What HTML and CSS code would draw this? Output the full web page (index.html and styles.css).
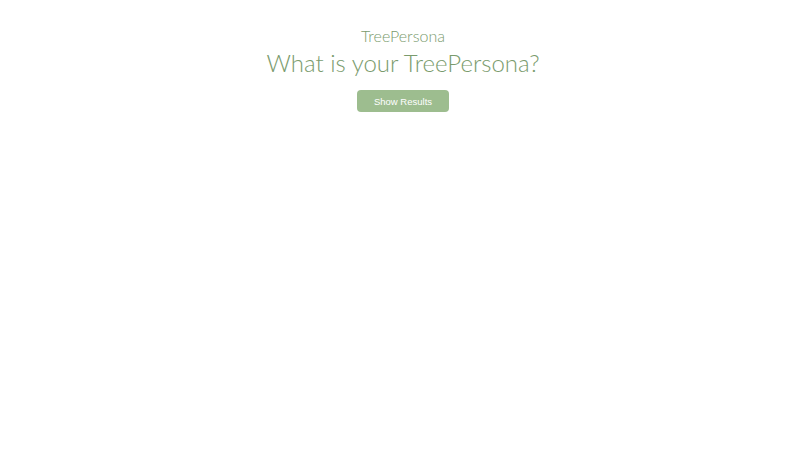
FILE: index.html
```html
<!DOCTYPE html>
<html>
<head>
<meta charset="utf-8">
<link rel="stylesheet" href="styles.css">
</head>
<body>
<main class="page">
  <p class="brand">TreePersona</p>
  <h1 class="title">What is your TreePersona?</h1>
  <button class="btn">Show Results</button>
</main>
</body>
</html>
```
FILE: styles.css
```css
html, body { margin: 0; padding: 0; background: #fff; }
.page {
  display: flex;
  flex-direction: column;
  align-items: center;
  padding-top: 26px;
  font-family: "Lato", "Liberation Sans", sans-serif;
  color: #7a9b6d;
}
.brand {
  margin: 0;
  font-size: 16px;
  font-weight: 300;
  line-height: 20px;
}
.title {
  margin: 2px 0 0;
  font-size: 24px;
  font-weight: 300;
  line-height: 30px;
}
.btn {
  margin-top: 12px;
  width: 92px;
  height: 22px;
  border: none;
  border-radius: 4px;
  background: #9dbd8f;
  color: #fff;
  font-family: "Liberation Sans", Arial, sans-serif;
  font-size: 9.5px;
  padding: 0;
}
```
